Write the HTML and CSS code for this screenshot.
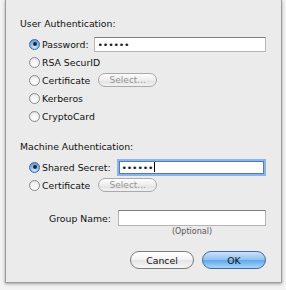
FILE: index.html
```html
<!DOCTYPE html>
<html>
<head>
<meta charset="utf-8">
<link rel="stylesheet" href="styles.css">
</head>
<body>
<div class="panel">
  <div class="heading">User Authentication:</div>
  <div class="row"><span class="radio on"></span><span class="lbl">Password:</span><span class="field pw">••••••</span></div>
  <div class="row"><span class="radio"></span><span class="lbl">RSA SecurID</span></div>
  <div class="row"><span class="radio"></span><span class="lbl">Certificate</span><span class="select">Select...</span></div>
  <div class="row"><span class="radio"></span><span class="lbl">Kerberos</span></div>
  <div class="row"><span class="radio"></span><span class="lbl">CryptoCard</span></div>

  <div class="heading h2">Machine Authentication:</div>
  <div class="row"><span class="radio on"></span><span class="lbl">Shared Secret:</span><span class="field focus ss">••••••<i class="caret"></i></span></div>
  <div class="row"><span class="radio"></span><span class="lbl">Certificate</span><span class="select">Select...</span></div>

  <div class="row grp"><span class="glbl">Group Name:</span><span class="field gn"></span></div>
  <div class="optional">(Optional)</div>

  <div class="buttons">
    <span class="btn cancel">Cancel</span>
    <span class="btn ok">OK</span>
  </div>
</div>
</body>
</html>
```

FILE: styles.css
```css
html, body {
  margin: 0;
  padding: 0;
}
body {
  width: 286px;
  height: 290px;
  background: #f3f3f3;
  font-family: "DejaVu Sans", sans-serif;
  font-size: 9.3px;
  color: #111;
  overflow: hidden;
}
.panel {
  box-sizing: border-box;
  margin-left: 5px;
  width: 277px;
  height: 283px;
  background: #ebebeb;
  border: 1px solid #9c9c9c;
  border-top: none;
  box-shadow: 0 1px 3px rgba(0,0,0,0.35);
  padding: 15px 15px 0 14px;
}
.heading {
  height: 18px;
  line-height: 18px;
  margin-bottom: 2px;
}
.heading.h2 {
  margin-top: 13px;
}
.row {
  display: flex;
  align-items: center;
  height: 18px;
  padding-left: 9px;
}
.radio {
  box-sizing: border-box;
  width: 11px;
  height: 11px;
  border-radius: 50%;
  border: 1px solid #8a8a8a;
  background: radial-gradient(circle at 50% 70%, #ffffff 0%, #f4f4f4 50%, #d6d6d6 100%);
  margin-right: 2px;
  flex: none;
  position: relative;
}
.radio.on {
  border-color: #3e6aa6;
  background: radial-gradient(circle at 50% 75%, #d6ecff 0%, #8ebde9 45%, #4b88cf 100%);
}
.radio.on::after {
  content: "";
  position: absolute;
  left: 2.5px;
  top: 2.5px;
  width: 4px;
  height: 4px;
  border-radius: 50%;
  background: #1b2a3a;
}
.lbl {
  white-space: nowrap;
}
.field {
  box-sizing: border-box;
  flex: 1;
  height: 15px;
  background: #fff;
  border: 1px solid #b4b4b4;
  border-top-color: #7d7d7d;
  display: flex;
  align-items: center;
  font-size: 9.3px;
  letter-spacing: -0.2px;
  color: #222;
}
.field.pw {
  margin-left: 5px;
  padding-left: 3px;
}
.field.ss {
  margin-left: 8px;
  margin-right: 2px;
  height: 13px;
  padding-left: 2px;
}
.field.focus {
  border: 1px solid #4a7cc0;
  box-shadow: 0 0 0 2px #8db4e4;
}
.caret {
  display: inline-block;
  width: 1px;
  height: 10px;
  background: #000;
  margin-left: 1px;
}
.select {
  box-sizing: border-box;
  margin-left: 8px;
  width: 59px;
  height: 14px;
  border: 1px solid #a9a9a9;
  border-radius: 7px;
  background: linear-gradient(#fdfdfd, #ececec 55%, #e2e2e2 56%, #f2f2f2);
  color: #959595;
  display: flex;
  align-items: center;
  justify-content: center;
  font-size: 9px;
}
.row.grp {
  margin-top: 15px;
  padding-left: 29px;
}
.glbl {
  width: 69px;
  white-space: nowrap;
}
.field.gn {
  height: 16px;
}
.optional {
  height: 10px;
  line-height: 10px;
  font-size: 8px;
  color: #555;
  padding-left: 98px;
  text-align: center;
}
.buttons {
  display: flex;
  justify-content: flex-end;
  gap: 8px;
  margin-top: 14px;
  padding-right: 0px;
}
.btn {
  box-sizing: border-box;
  width: 64px;
  height: 18px;
  border-radius: 9px;
  border: 1px solid #7c7c7c;
  display: flex;
  align-items: center;
  justify-content: center;
  color: #111;
}
.btn.cancel {
  background: linear-gradient(#ffffff, #f3f3f3 50%, #e4e4e4 51%, #f7f7f7);
}
.btn.ok {
  border-color: #3f6a9f;
  background: linear-gradient(#c9e2fb, #8dc1f2 50%, #5fa6ea 51%, #a8d8fb);
}
```
